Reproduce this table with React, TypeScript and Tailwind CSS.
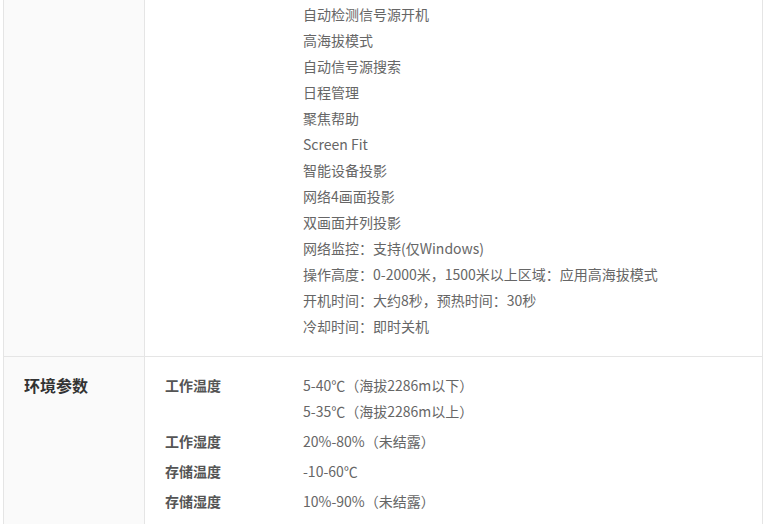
import React from "react";

const features = [
  "自动检测信号源开机",
  "高海拔模式",
  "自动信号源搜索",
  "日程管理",
  "聚焦帮助",
  "Screen Fit",
  "智能设备投影",
  "网络4画面投影",
  "双画面并列投影",
  "网络监控：支持(仅Windows)",
  "操作高度：0-2000米，1500米以上区域：应用高海拔模式",
  "开机时间：大约8秒，预热时间：30秒",
  "冷却时间：即时关机",
];

const env: { label: string; values: string[] }[] = [
  { label: "工作温度", values: ["5-40℃（海拔2286m以下）", "5-35℃（海拔2286m以上）"] },
  { label: "工作湿度", values: ["20%-80%（未结露）"] },
  { label: "存储温度", values: ["-10-60℃"] },
  { label: "存储湿度", values: ["10%-90%（未结露）"] },
];

export default function App() {
  return (
    <div
      className="w-[766px] h-[524px] overflow-hidden bg-white"
      style={{ fontFamily: '"Microsoft YaHei", "Noto Sans CJK SC", "Noto Sans", sans-serif' }}
    >
      <div className="ml-[3px] w-[760px] border-x border-[#e5e5e5]">
        <div className="flex border-b border-[#e5e5e5]">
          <div className="w-[141px] shrink-0 bg-[#fafafa] border-r border-[#e5e5e5]" />
          <div className="flex-1 pl-[158px] pt-[1px] pb-[17px]">
            {features.map((f) => (
              <div key={f} className="text-[14px] leading-[26px] text-[#666]">
                {f}
              </div>
            ))}
          </div>
        </div>
        <div className="flex">
          <div className="w-[141px] shrink-0 bg-[#fafafa] border-r border-[#e5e5e5] pl-[20px] pt-[15px] pb-[20px]">
            <div className="text-[16px] leading-[26px] font-bold text-[#333]">环境参数</div>
          </div>
          <div className="flex-1 pt-[13px] pb-[20px]">
            {env.map((r) => (
              <div key={r.label} className="flex py-[2px]">
                <div className="w-[158px] shrink-0 pl-[20px] text-[14px] leading-[26px] font-bold text-[#555]">
                  {r.label}
                </div>
                <div>
                  {r.values.map((v) => (
                    <div key={v} className="text-[14px] leading-[26px] text-[#666]">
                      {v}
                    </div>
                  ))}
                </div>
              </div>
            ))}
          </div>
        </div>
      </div>
    </div>
  );
}
